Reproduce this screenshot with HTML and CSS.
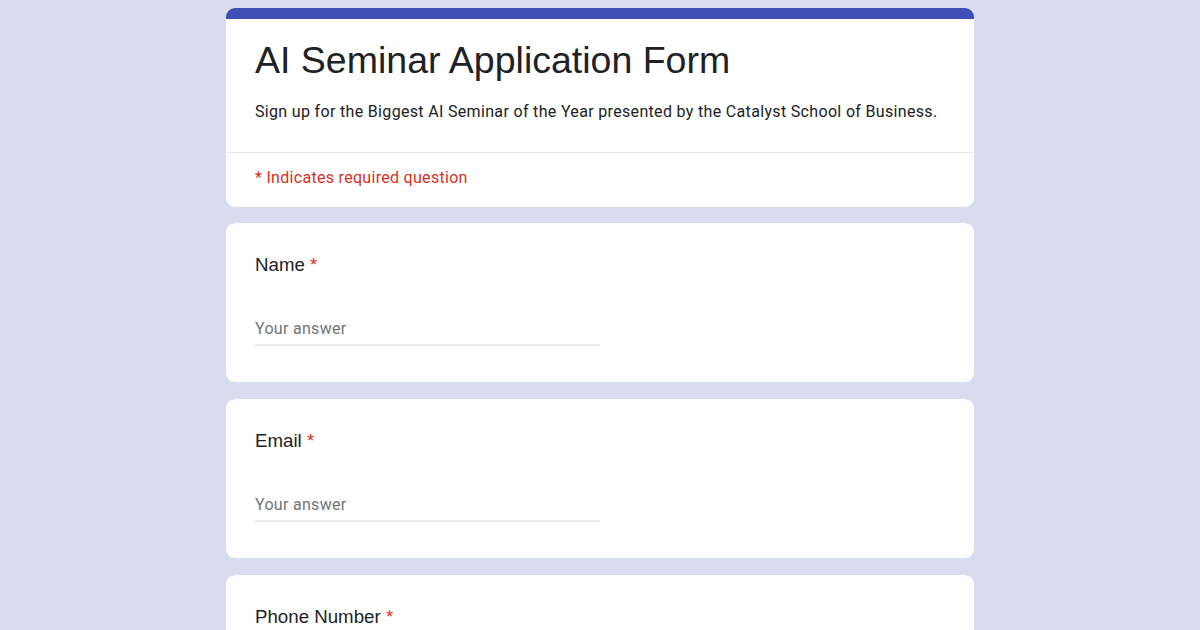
FILE: index.html
```html
<!DOCTYPE html>
<html lang="en">
<head>
<meta charset="utf-8">
<title>AI Seminar Application Form</title>
<link rel="stylesheet" href="styles.css">
</head>
<body>
<main class="form">
  <section class="card header-card">
    <div class="header-main">
      <h1 class="title">AI Seminar Application Form</h1>
      <p class="desc">Sign up for the Biggest AI Seminar of the Year presented by the Catalyst School of Business.</p>
    </div>
    <div class="header-note">* Indicates required question</div>
  </section>

  <section class="card question">
    <div class="q-label">Name <span class="req">*</span></div>
    <div class="answer">Your answer</div>
  </section>

  <section class="card question">
    <div class="q-label">Email <span class="req">*</span></div>
    <div class="answer">Your answer</div>
  </section>

  <section class="card question">
    <div class="q-label">Phone Number <span class="req">*</span></div>
    <div class="answer">Your answer</div>
  </section>
</main>
</body>
</html>
```

FILE: styles.css
```css
html, body {
  margin: 0;
  padding: 0;
}
body {
  background: #d9dbee;
  height: 630px;
  overflow: hidden;
}
.form {
  width: 748px;
  margin: 8px auto 0;
  display: flex;
  flex-direction: column;
  gap: 16px;
}
.card {
  background: #ffffff;
  border-radius: 9px;
}
.header-card {
  border-top: 11px solid #3f4fb5;
}
.header-main {
  padding: 19px 29px 30px;
  border-bottom: 1px solid #e8e8ea;
}
.title {
  margin: 0;
  font-family: "Liberation Sans", Arial, sans-serif;
  font-weight: 400;
  font-size: 37.5px;
  line-height: 44px;
  color: #202124;
}
.desc {
  margin: 20px 0 0;
  font-family: Roboto, "Liberation Sans", sans-serif;
  font-size: 16px;
  line-height: 20px;
  letter-spacing: 0.33px;
  color: #202124;
}
.header-note {
  padding: 15px 29px 19px;
  font-family: Roboto, "Liberation Sans", sans-serif;
  font-size: 16px;
  line-height: 20px;
  letter-spacing: 0.3px;
  color: #d93025;
}
.question {
  padding: 30px 29px 36px;
}
.question + .question {
  margin-top: 1px;
}
.q-label {
  font-family: "Liberation Sans", Arial, sans-serif;
  font-size: 18.7px;
  line-height: 24px;
  color: #202124;
}
.req {
  color: #d93025;
}
.answer {
  margin-top: 42px;
  width: 345px;
  padding-bottom: 5px;
  border-bottom: 2px solid #e8e8ea;
  font-family: Roboto, "Liberation Sans", sans-serif;
  font-size: 16px;
  line-height: 20px;
  letter-spacing: 0.3px;
  color: #70757a;
}
```
